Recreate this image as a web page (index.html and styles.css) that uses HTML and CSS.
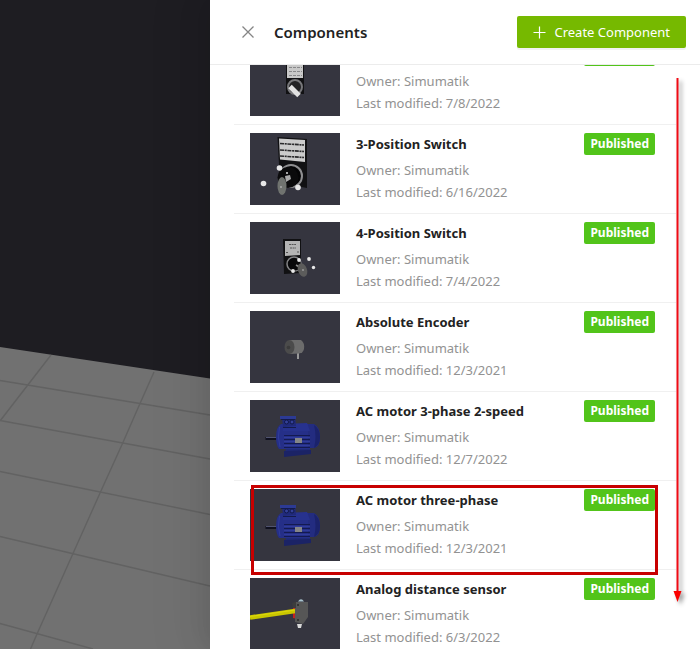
FILE: index.html
```html
<!DOCTYPE html>
<html lang="en">
<head>
<meta charset="utf-8">
<title>Components</title>
<link rel="stylesheet" href="styles.css">
</head>
<body>
<div class="app">
  <div class="scene">
    <svg class="scene-art" viewBox="0 0 210 649" preserveAspectRatio="xMinYMin slice" aria-hidden="true">
      <path fill="#1e1d22" d="M0 0H210V649H0z"/>
      <path fill="#717171" d="M0 347L210 378.500V649H0z"/>
      <path fill="none" stroke="#626262" stroke-width="1.400" d="M0 380.500L210 415M0 420.500L210 459M0 471.500L210 514.500M0 536.500L210 586M0 623.500L93 649M51 355L0 421M154 372L140 403.500L122.500 443.500L100.500 492L73 553.500L37 634L30.500 649"/>
    </svg>
  </div>
  <aside class="drawer">
    <header class="drawer-head">
      <button class="close" type="button" aria-label="Close">
        <svg width="12" height="12" viewBox="0 0 12 12"><path d="M.5 .5L11.500 11.500M11.500 .5L.5 11.500"/></svg>
      </button>
      <h1 class="drawer-title">Components</h1>
      <button class="create" type="button">
        <svg width="13" height="13" viewBox="0 0 13 13" aria-hidden="true"><path d="M6.500 .5V12.500M.5 6.500H12.500"/></svg>
        Create Component
      </button>
    </header>
    <div class="drawer-body">
      <ul class="list">
        <li class="item">
          <svg class="thumb" viewBox="0 0 90 72" aria-hidden="true">
            <path fill="#111113" d="M36 8H54V50H36z"/><path fill="#c8c8c8" d="M37 10H53V34H37z"/>
            <path stroke="#88888a" stroke-dasharray="3 1" d="M39 23.500H52M39 27.500H52M39 31.500H52"/>
            <circle cx="45" cy="43" r="7" fill="#222224" stroke="#77777a" stroke-width="2"/>
            <path stroke="#e2e2e2" stroke-width="5" d="M40 42.500L49 51.500"/>
          </svg>
          <div class="info"><h2 class="name">2-Position Switch</h2><p>Owner: Simumatik</p><p>Last modified: 7/8/2022</p></div>
          <span class="tag">Published</span>
        </li>
        <li class="item">
          <svg class="thumb" viewBox="0 0 90 72" aria-hidden="true">
            <path fill="#111113" d="M27.500 4L57 6V55L30 50z"/><path fill="#cbcbcb" d="M29 5.500L55 7V29L30 26.500z"/>
            <path stroke="#29292b" stroke-width="1.600" stroke-dasharray="4 .7 2 .7" d="M30 10.500L54 12M30 17L54 18.500M30 23L54 24.500"/>
            <circle cx="41" cy="43" r="11" fill="#050506" stroke="#8f8f91" stroke-width="2"/>
            <circle cx="38" cy="44.500" r="10.500" fill="#0b0b0c"/>
            <path fill="#aaa" d="M35 43L40 42L41 46L36 49z"/><circle cx="37" cy="40" r="1" fill="#ddd"/>
            <ellipse cx="32" cy="53" rx="4.500" ry="9" fill="#70736f"/><circle cx="31" cy="54" r="1" fill="#aaa"/>
            <g fill="#e8e8e8"><circle cx="29.500" cy="35" r="2.800"/><circle cx="13.500" cy="50.500" r="2.800"/><circle cx="48" cy="54.500" r="2.800"/></g>
          </svg>
          <div class="info"><h2 class="name">3-Position Switch</h2><p>Owner: Simumatik</p><p>Last modified: 6/16/2022</p></div>
          <span class="tag">Published</span>
        </li>
        <li class="item">
          <svg class="thumb" viewBox="0 0 90 72" aria-hidden="true">
            <path fill="#111113" d="M33 17L51 17V51L34 52z"/><path fill="#b4b4b4" d="M35 19H50V33L35 34z"/>
            <path stroke="#555" stroke-dasharray="2 .6" d="M39 22.500H46M40 26H46M36 30.500H38M47 30H49"/>
            <circle cx="44" cy="42" r="7" fill="#08080a" stroke="#858587" stroke-width="1.500"/>
            <circle cx="45" cy="42.500" r="6" fill="#08080a"/>
            <path stroke="#909090" stroke-width="1.500" d="M46 43L51 46"/>
            <ellipse cx="52.500" cy="48" rx="4.500" ry="7" transform="rotate(-20 52.500 48)" fill="#5c5c5b"/><circle cx="53" cy="48" r="1" fill="#999"/>
            <g fill="#e8e8e8"><circle cx="49" cy="38" r="1.900"/><circle cx="59" cy="37" r="1.900"/><circle cx="63.500" cy="45.500" r="1.700"/><circle cx="43" cy="49" r="1.900"/></g>
          </svg>
          <div class="info"><h2 class="name">4-Position Switch</h2><p>Owner: Simumatik</p><p>Last modified: 7/4/2022</p></div>
          <span class="tag">Published</span>
        </li>
        <li class="item">
          <svg class="thumb" viewBox="0 0 90 72" aria-hidden="true">
            <path stroke="#999" stroke-width="2" d="M48 41V48"/>
            <path fill="#6c6c6c" d="M39 29L51 29Q55 32 54 38Q53 42 49 42.500L40 43z"/>
            <ellipse cx="39.500" cy="36" rx="5" ry="7" fill="#4b4b4b"/><circle cx="38.500" cy="36.500" r="1.800" fill="#3b3b3b"/>
          </svg>
          <div class="info"><h2 class="name">Absolute Encoder</h2><p>Owner: Simumatik</p><p>Last modified: 12/3/2021</p></div>
          <span class="tag">Published</span>
        </li>
        <li class="item">
          <svg class="thumb" viewBox="0 0 90 72" aria-hidden="true">
            <g id="motor">
              <path stroke="#10111f" stroke-width="3" d="M15.500 38.500H28"/><path stroke="#50536f" d="M16 37.500H27"/>
              <path fill="#202b78" d="M36 47H60V53L35 55z"/><path fill="#1b2366" d="M34 51L61 50V54L34 57z"/>
              <path fill="#252f88" d="M31 24H60V49H29Q26 45 26 37Q26 27 31 24z"/>
              <path fill="#232c80" d="M58 24H64Q70 27 70 37Q70 47 64 48H58z"/><path fill="#1b236c" d="M64 25Q70 29 70 37Q70 45 64 48Q67 37 64 25z"/>
              <path stroke="#141a50" d="M34 35.500H60M34 39.500H60M34 43.500H60M34 47.500H60"/>
              <path stroke="#3340a0" stroke-width=".8" d="M34 37.500H60M34 41.500H60M34 45.500H60M29.500 27Q27 37 30 47"/>
              <path fill="#27328f" d="M33 24L57 23L60 31H33z"/><path fill="#202a7b" d="M32 17L45 16L46 26L33 27z"/>
              <path stroke="#2c3a94" stroke-width="3" d="M30 17.500H46"/><path stroke="#141b4b" d="M31 19.500H45M33 27.500H46"/>
              <circle cx="36.500" cy="22" r="2" fill="#34419a" stroke="#11184b"/><circle cx="42" cy="22" r="2" fill="#34419a" stroke="#11184b"/>
              <path fill="#858687" d="M45 38H52V43H45z"/>
            </g>
          </svg>
          <div class="info"><h2 class="name">AC motor 3-phase 2-speed</h2><p>Owner: Simumatik</p><p>Last modified: 12/7/2022</p></div>
          <span class="tag">Published</span>
        </li>
        <li class="item marked">
          <svg class="thumb" viewBox="0 0 90 72" aria-hidden="true"><use href="#motor"/></svg>
          <div class="info"><h2 class="name">AC motor three-phase</h2><p>Owner: Simumatik</p><p>Last modified: 12/3/2021</p></div>
          <span class="tag">Published</span>
        </li>
        <li class="item">
          <svg class="thumb" viewBox="0 0 90 72" aria-hidden="true">
            <path fill="#c52020" d="M43 29L48 28V41L43 40z"/>
            <path stroke="#c9c600" stroke-width="4.500" d="M0 39.500L45 33"/><path stroke="#dcd80c" d="M0 38.500L45 32"/>
            <path fill="#a9c4ce" d="M48 23.500Q51 19 54 23.500z"/>
            <path fill="#565656" d="M45 24L58 24V39L53 46L45 44z"/><path fill="#3c3c3d" d="M42 25L46 23.500V30L43 30z"/>
            <circle cx="48" cy="27" r="1" fill="#292929"/><circle cx="48" cy="42" r="1" fill="#292929"/>
            <path fill="#d8d8d8" d="M47 46H52L51 50H48z"/>
          </svg>
          <div class="info"><h2 class="name">Analog distance sensor</h2><p>Owner: Simumatik</p><p>Last modified: 6/3/2022</p></div>
          <span class="tag">Published</span>
        </li>
      </ul>
    </div>
    <svg class="arrow" width="16" height="532" viewBox="0 0 16 532" aria-hidden="true">
      <path class="arrow-line" d="M5.500 2V516"/>
      <path class="arrow-head" d="M1.500 515H9.500L5.500 526z"/>
    </svg>
  </aside>
</div>
</body>
</html>
```
FILE: styles.css
```css
* {
  box-sizing: border-box;
}

body {
  margin: 0;
  font-family: "Noto Sans", "Open Sans", sans-serif;
  font-size: 13px;
  line-height: 22px;
  color: #222;
}

h1, h2, p, ul {
  margin: 0;
  padding: 0;
}

.app {
  display: grid;
  grid-template-columns: 3fr 7fr;
  height: 100vh;
  overflow: hidden;
}

.scene {
  min-height: 0;
  background: #1e1d22;
}

.scene-art {
  display: block;
  width: 100%;
  height: 100%;
}

.drawer {
  position: relative;
  display: flex;
  flex-direction: column;
  min-height: 0;
  background: #fff;
  box-shadow: -6px 0 16px -8px rgba(0, 0, 0, .08), -9px 0 28px rgba(0, 0, 0, .05), -12px 0 48px 16px rgba(0, 0, 0, .03);
}

.drawer-head {
  display: flex;
  flex: none;
  align-items: center;
  padding: 16px 14px 16px 32px;
  border-bottom: 1px solid #ececec;
}

.close {
  display: flex;
  margin: 0 20px 0 0;
  padding: 0;
  border: 0;
  background: none;
  cursor: pointer;
}

.close path {
  fill: none;
  stroke: #858585;
  stroke-width: 1.3;
}

.drawer-title {
  flex: 1;
  font-size: 15px;
  font-weight: 600;
}

.create {
  display: flex;
  align-items: center;
  gap: 8px;
  height: 32px;
  padding: 0 16px;
  border: 0;
  border-radius: 2px;
  background: #76b900;
  box-shadow: 0 2px 0 rgba(0, 0, 0, .05);
  color: #fff;
  font: inherit;
  cursor: pointer;
}

.create path {
  fill: none;
  stroke: #fff;
  stroke-width: 1.2;
}

.drawer-body {
  flex: 1;
  min-height: 0;
  padding: 0 24px;
  overflow: hidden;
}

/* The list is shown part-way scrolled. */
.list {
  margin-top: -29px;
  list-style: none;
}

.item {
  position: relative;
  display: flex;
  align-items: flex-start;
  padding: 8px 21px 8px 16px;
  border-bottom: 1px solid #f0f0f0;
}

.thumb {
  flex: none;
  width: 90px;
  height: 72px;
  margin-right: 16px;
  background: #35353f;
  fill: none;
}

.info {
  flex: 1;
  color: #929292;
}

.name {
  margin-bottom: 4px;
  color: #222;
  font-size: 13px;
  font-weight: 700;
}

.tag {
  padding: 0 6px;
  border-radius: 2px;
  background: #52c41a;
  color: #fff;
  font-size: 12px;
  font-weight: 700;
}

.marked::after {
  content: "";
  position: absolute;
  z-index: 1;
  inset: 4px 18px -6px 17px;
  border: 3px solid #c80000;
}

.arrow {
  position: absolute;
  top: 76px;
  right: 12px;
  filter: drop-shadow(3px 3px 2px rgba(0, 0, 0, .4));
}

.arrow-line {
  stroke: #f00a14;
  stroke-width: 2;
}

.arrow-head {
  fill: #fa0000;
}
```
